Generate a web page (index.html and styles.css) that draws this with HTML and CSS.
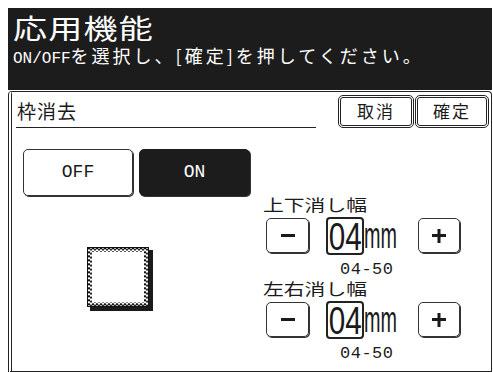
FILE: index.html
```html
<!DOCTYPE html>
<html lang="ja">
<head>
<meta charset="utf-8">
<link rel="stylesheet" href="styles.css">
</head>
<body>
<div class="screen">
  <header class="header">
    <div class="title"><span class="title-text">応用機能</span></div>
    <div class="subtitle"><span class="latin">ON/OFF</span>を選択し、[確定]を押してください。</div>
  </header>
  <section class="panel">
    <div class="topbar">
      <div class="func-name">枠消去</div>
      <div class="actions">
        <div class="act act-cancel">取消</div>
        <div class="act act-ok">確定</div>
      </div>
    </div>
    <div class="content">
      <div class="left">
        <div class="toggles">
          <div class="toggle">OFF</div>
          <div class="toggle on">ON</div>
        </div>
        <div class="preview">
          <svg width="66" height="64" viewBox="0 0 66 64">
            <defs>
              <pattern id="zz" width="4" height="4" patternUnits="userSpaceOnUse">
                <path d="M0 3.5 L2 0.5 L4 3.5" fill="none" stroke="#111" stroke-width="1.2"/>
              </pattern>
            </defs>
            <rect x="3" y="3" width="63" height="61" fill="#1a1a1a"/>
            <rect x="0.5" y="0.5" width="61" height="59" fill="#fff" stroke="#111" stroke-width="1"/>
            <rect x="1" y="1" width="60" height="58" fill="url(#zz)"/>
            <rect x="5" y="5" width="52" height="50" fill="#fff"/>
          </svg>
        </div>
      </div>
      <div class="right">
        <div class="setting">
          <div class="label"><span class="label-text">上下消し幅</span></div>
          <div class="stepper">
            <div class="step minus"><span class="bar"></span></div>
            <div class="value"><span class="value-text">04</span></div>
            <div class="unit"><span class="unit-text">mm</span></div>
            <div class="step plus"><span class="bar"></span><span class="bar vbar"></span></div>
          </div>
          <div class="range">04-50</div>
        </div>
        <div class="setting">
          <div class="label"><span class="label-text">左右消し幅</span></div>
          <div class="stepper">
            <div class="step minus"><span class="bar"></span></div>
            <div class="value"><span class="value-text">04</span></div>
            <div class="unit"><span class="unit-text">mm</span></div>
            <div class="step plus"><span class="bar"></span><span class="bar vbar"></span></div>
          </div>
          <div class="range">04-50</div>
        </div>
      </div>
    </div>
  </section>
</div>
</body>
</html>
```
FILE: styles.css
```css
html, body {
  background: #fff;
}
body {
  margin: 8px 0 0 8px;
  overflow: hidden;
}
.screen {
  width: 484px;
  height: 364px;
  display: flex;
  flex-direction: column;
  font-family: "Noto Sans CJK JP", sans-serif;
  color: #1a1a1a;
}
.header {
  flex: none;
  height: 82px;
  box-sizing: border-box;
  background: #1c1c1c;
  color: #fff;
  padding: 2px 0 0 5px;
}
.title {
  height: 35px;
  font-size: 27px;
  line-height: 35px;
}
.title-text {
  display: inline-block;
  letter-spacing: 1px;
  transform: scaleX(1.26);
  transform-origin: left center;
}
.subtitle {
  font-size: 18px;
  line-height: 20px;
  letter-spacing: 3px;
  white-space: nowrap;
}
.latin {
  font-family: "Liberation Mono", monospace;
  font-size: 16px;
  letter-spacing: 0;
}
.panel {
  flex: 1;
  margin-top: 1px;
  border: 1px solid #222;
  border-left: 4px double #222;
  border-radius: 4px 4px 0 0;
  display: flex;
  flex-direction: column;
  min-height: 0;
}
.topbar {
  display: flex;
  margin-top: 3px;
  height: 33px;
}
.func-name {
  margin-left: 4px;
  width: 300px;
  box-sizing: border-box;
  border-bottom: 1px solid #222;
  padding: 5px 0 0 1px;
  font-size: 19px;
  line-height: 22px;
  letter-spacing: 1px;
}
.actions {
  display: flex;
  gap: 1px;
  margin-left: 22px;
}
.act {
  height: 33px;
  box-sizing: border-box;
  border: 3px double #222;
  border-radius: 5px;
  font-size: 17px;
  line-height: 26px;
  letter-spacing: 2px;
  text-align: center;
}
.act-cancel { width: 76px; }
.act-ok { width: 74px; }
.content {
  display: flex;
  flex: 1;
}
.left {
  width: 250px;
  flex: none;
}
.toggles {
  display: flex;
  gap: 6px;
  padding: 21px 0 0 11px;
}
.toggle {
  width: 110px;
  height: 47px;
  box-sizing: border-box;
  border: 1px solid #333;
  border-radius: 5px;
  box-shadow: 1px 1px 0 #333;
  font-family: "Liberation Mono", monospace;
  font-size: 18px;
  line-height: 45px;
  text-align: center;
}
.toggle.on {
  width: 111px;
  background: #1c1c1c;
  border-color: #1c1c1c;
  color: #fff;
}
.preview {
  margin: 51px 0 0 75px;
  height: 64px;
}
.preview svg {
  display: block;
}
.right {
  padding: 67px 0 0 1px;
  display: flex;
  flex-direction: column;
  gap: 1px;
}
.setting {
  display: flex;
  flex-direction: column;
}
.label {
  font-size: 16px;
  line-height: 18px;
  height: 18px;
}
.label-text {
  display: inline-block;
  transform: scaleX(1.3);
  transform-origin: left center;
}
.stepper {
  display: flex;
  align-items: center;
  height: 37px;
  margin-top: 4px;
}
.step {
  height: 35px;
  box-sizing: border-box;
  border: 1px solid #333;
  border-radius: 5px;
  box-shadow: 1px 1px 0 #333;
  display: flex;
  align-items: center;
  justify-content: center;
  position: relative;
}
.minus {
  width: 43px;
  margin-left: 3px;
}
.plus {
  width: 42px;
  margin-left: 18px;
}
.bar {
  display: block;
  width: 14px;
  height: 3px;
  background: #1a1a1a;
}
.vbar {
  position: absolute;
  width: 3px;
  height: 14px;
  left: 50%;
  top: 50%;
  transform: translate(-50%, -50%);
}
.value {
  width: 38px;
  height: 38px;
  margin-left: 17px;
  box-sizing: border-box;
  border: 2px solid #222;
  border-radius: 4px;
  font-family: "Liberation Sans", sans-serif;
  font-size: 38px;
  line-height: 36px;
  text-align: center;
  white-space: nowrap;
}
.value-text {
  display: inline-block;
  transform: scaleX(0.78);
  transform-origin: center center;
  margin: 0 -4px;
}
.unit {
  width: 36px;
  height: 37px;
}
.unit-text {
  display: inline-block;
  font-family: "Liberation Sans", sans-serif;
  font-size: 36px;
  line-height: 37px;
  transform: scaleX(0.55);
  transform-origin: left center;
}
.range {
  margin-top: 8px;
  padding-left: 77px;
  font-family: "Liberation Mono", monospace;
  font-size: 17px;
  line-height: 16px;
  letter-spacing: 0.5px;
}
```
